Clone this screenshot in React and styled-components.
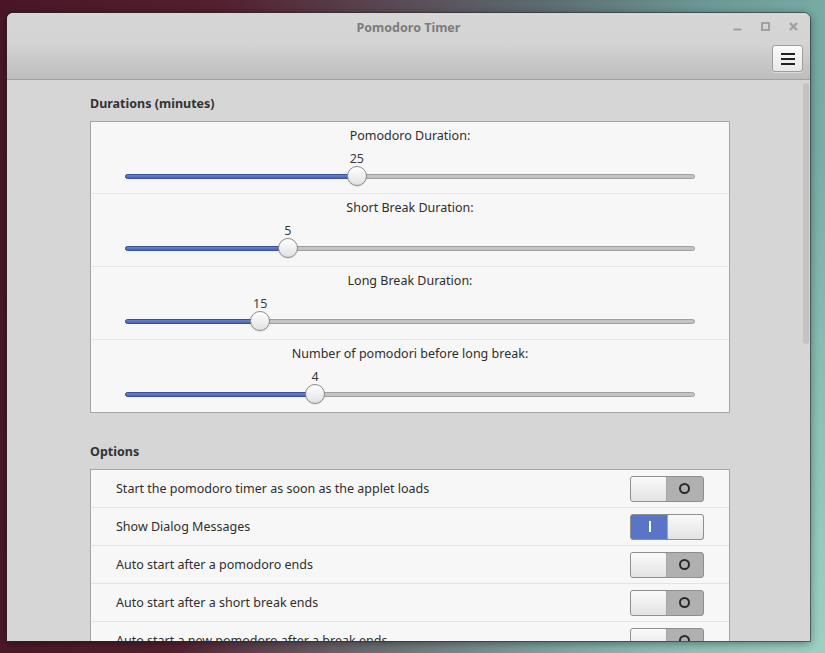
import React from "react";
import styled, { createGlobalStyle } from "styled-components";

const Global = createGlobalStyle`
  html, body { margin: 0; padding: 0; }
  body {
    width: 825px; height: 653px; overflow: hidden;
    background:
      radial-gradient(ellipse at 100% 100%, rgba(170,220,205,0.7), rgba(170,220,205,0) 55%),
      linear-gradient(95deg, #4a1627 0%, #52202f 25%, #5a4a55 45%, #5d6c72 62%, #6b9896 80%, #7fb3ab 100%);
    font-family: "Noto Sans", "Open Sans", sans-serif;
  }
`;

const Desktop = styled.div`
  padding: 13px 0 0 7px;
`;

const Window = styled.div`
  width: 803px;
  height: 628px;
  display: flex;
  flex-direction: column;
  border-radius: 6px 6px 0 0;
  overflow: hidden;
  background: #d6d6d6;
  box-shadow: 0 0 0 1px rgba(40,40,40,0.55), 0 2px 10px rgba(0,0,0,0.45);
`;

const Header = styled.div`
  height: 66px;
  flex: none;
  border-bottom: 1px solid #a3a3a3;
  background: linear-gradient(#d6d6d6 0px, #d4d4d4 30px, #bdbdbd 66px);
  display: grid;
  grid-template-rows: 28px 1fr;
`;

const TitleRow = styled.div`
  position: relative;
  display: flex;
  align-items: center;
  justify-content: center;
`;

const Title = styled.div`
  font-size: 12.5px;
  font-weight: 700;
  color: #7c7c7c;
  padding-top: 1px;
`;

const Controls = styled.div`
  position: absolute;
  right: 12px;
  top: 9px;
  display: flex;
  gap: 19px;
  align-items: center;
`;

const ToolRow = styled.div`
  display: flex;
  justify-content: flex-end;
  align-items: flex-start;
  padding: 4px 7px 0 0;
`;

const MenuButton = styled.div`
  width: 29px;
  height: 25px;
  border: 1px solid #9e9e9e;
  border-radius: 3px;
  background: linear-gradient(#fbfbfb, #e8e8e8);
  box-shadow: 0 1px 0 rgba(255,255,255,0.4);
  display: flex;
  flex-direction: column;
  justify-content: center;
  align-items: center;
  gap: 3px;
`;

const Bar = styled.span`
  width: 14px;
  height: 2px;
  background: #222;
`;

const Body = styled.div`
  flex: 1;
  position: relative;
  overflow: hidden;
  padding: 0 0 0 83px;
`;

const ScrollThumb = styled.div`
  position: absolute;
  right: 1px;
  top: 3px;
  width: 6px;
  height: 261px;
  border-radius: 3px;
  background: #c3c3c3;
`;

const SectionTitle = styled.div`
  font-size: 12.5px;
  font-weight: 700;
  color: #333;
  height: 41px;
  display: flex;
  align-items: center;
  padding-top: 5px;
  box-sizing: border-box;
  margin-top: ${(p) => p.gapAbove || 0}px;
`;

const Frame = styled.div`
  width: 638px;
  border: 1px solid #a5a5a5;
  background: #f7f7f7;
`;

const SliderRow = styled.div`
  height: ${(p) => (p.first ? "71px" : "73px")};
  border-top: ${(p) => (p.first ? "none" : "1px solid #e6e6e6")};
  display: flex;
  flex-direction: column;
  align-items: center;
  padding-top: 5px;
  box-sizing: border-box;
`;

const SliderLabel = styled.div`
  font-size: 12.5px;
  color: #2e2e2e;
  line-height: 17px;
  flex: none;
`;

const SliderArea = styled.div`
  position: relative;
  flex: none;
  width: 570px;
  height: 40px;
  margin-top: 7px;
`;

const ValueText = styled.div`
  position: absolute;
  top: 0;
  transform: translateX(-50%);
  font-size: 12.5px;
  color: #3a3a3a;
  line-height: 16px;
`;

const Track = styled.div`
  position: absolute;
  left: 0;
  right: 0;
  top: 23px;
  height: 5px;
  border-radius: 3px;
  box-sizing: border-box;
  border: 1px solid #9f9f9f;
  background: #c4c4c4;
`;

const Fill = styled.div`
  position: absolute;
  left: 0;
  top: 23px;
  height: 5px;
  border-radius: 3px;
  box-sizing: border-box;
  border: 1px solid #3a4f9a;
  background: linear-gradient(#6a80d0, #4c63b8);
`;

const Thumb = styled.div`
  position: absolute;
  top: 15px;
  width: 20px;
  height: 20px;
  box-sizing: border-box;
  border-radius: 50%;
  transform: translateX(-50%);
  border: 1px solid #8b8b8b;
  background: linear-gradient(#ffffff, #e2e2e2);
  box-shadow: 0 1px 1px rgba(0,0,0,0.1);
`;

const OptionRow = styled.div`
  height: ${(p) => (p.first ? "37px" : "38px")};
  box-sizing: border-box;
  border-top: ${(p) => (p.first ? "none" : "1px solid #e3e3e3")};
  display: flex;
  align-items: center;
  justify-content: space-between;
  padding: 0 25px 0 25px;
`;

const OptionText = styled.div`
  font-size: 12.5px;
  color: #2e2e2e;
`;

const Switch = styled.div`
  width: 74px;
  height: 26px;
  box-sizing: border-box;
  border: 1px solid #8f8f8f;
  border-radius: 3px;
  overflow: hidden;
  display: flex;
  flex-direction: ${(p) => (p.on ? "row" : "row-reverse")};
  background: ${(p) => (p.on ? "#5a74c7" : "#b0b0b0")};
`;

const SwitchState = styled.div`
  flex: 1;
  display: flex;
  align-items: center;
  justify-content: center;
`;

const OnMark = styled.span`
  width: 2px;
  height: 11px;
  background: #fff;
`;

const OffMark = styled.span`
  width: 7px;
  height: 7px;
  border: 2px solid #2a2a2a;
  border-radius: 50%;
`;

const Knob = styled.div`
  width: 37px;
  box-sizing: border-box;
  border-radius: 2px;
  border: 1px solid #a6a6a6;
  margin: -1px;
  background: linear-gradient(#fafafa, #e3e3e3);
`;

const sliders = [
  { label: "Pomodoro Duration:", value: 25, min: 1, max: 60 },
  { label: "Short Break Duration:", value: 5, min: 1, max: 15 },
  { label: "Long Break Duration:", value: 15, min: 1, max: 60 },
  { label: "Number of pomodori before long break:", value: 4, min: 1, max: 10 },
];

const options = [
  { label: "Start the pomodoro timer as soon as the applet loads", on: false },
  { label: "Show Dialog Messages", on: true },
  { label: "Auto start after a pomodoro ends", on: false },
  { label: "Auto start after a short break ends", on: false },
  { label: "Auto start a new pomodoro after a break ends", on: false },
];

function Slider({ label, value, min, max, first }) {
  const pct = ((value - min) / (max - min)) * 100;
  return (
    <SliderRow first={first}>
      <SliderLabel>{label}</SliderLabel>
      <SliderArea>
        <ValueText style={{ left: `${pct}%` }}>{value}</ValueText>
        <Track />
        <Fill style={{ width: `${pct}%` }} />
        <Thumb style={{ left: `${pct}%` }} />
      </SliderArea>
    </SliderRow>
  );
}

function Toggle({ on }) {
  return (
    <Switch on={on}>
      <SwitchState>{on ? <OnMark /> : <OffMark />}</SwitchState>
      <Knob />
    </Switch>
  );
}

export default function App() {
  return (
    <>
      <Global />
      <Desktop>
        <Window>
          <Header>
            <TitleRow>
              <Title>Pomodoro Timer</Title>
              <Controls>
                <svg width="9" height="9" viewBox="0 0 9 9">
                  <rect x="0.5" y="6.5" width="8" height="2" fill="#a0a0a0" />
                </svg>
                <svg width="9" height="9" viewBox="0 0 9 9">
                  <rect x="1" y="1" width="7" height="7" fill="none" stroke="#a0a0a0" strokeWidth="2" />
                </svg>
                <svg width="9" height="9" viewBox="0 0 9 9">
                  <path d="M1 1 L8 8 M8 1 L1 8" stroke="#a0a0a0" strokeWidth="2.4" />
                </svg>
              </Controls>
            </TitleRow>
            <ToolRow>
              <MenuButton>
                <Bar />
                <Bar />
                <Bar />
              </MenuButton>
            </ToolRow>
          </Header>
          <Body>
            <ScrollThumb />
            <SectionTitle>Durations (minutes)</SectionTitle>
            <Frame>
              {sliders.map((s, i) => (
                <Slider key={s.label} {...s} first={i === 0} />
              ))}
            </Frame>
            <SectionTitle gapAbove={15}>Options</SectionTitle>
            <Frame>
              {options.map((o, i) => (
                <OptionRow key={o.label} first={i === 0}>
                  <OptionText>{o.label}</OptionText>
                  <Toggle on={o.on} />
                </OptionRow>
              ))}
            </Frame>
          </Body>
        </Window>
      </Desktop>
    </>
  );
}
